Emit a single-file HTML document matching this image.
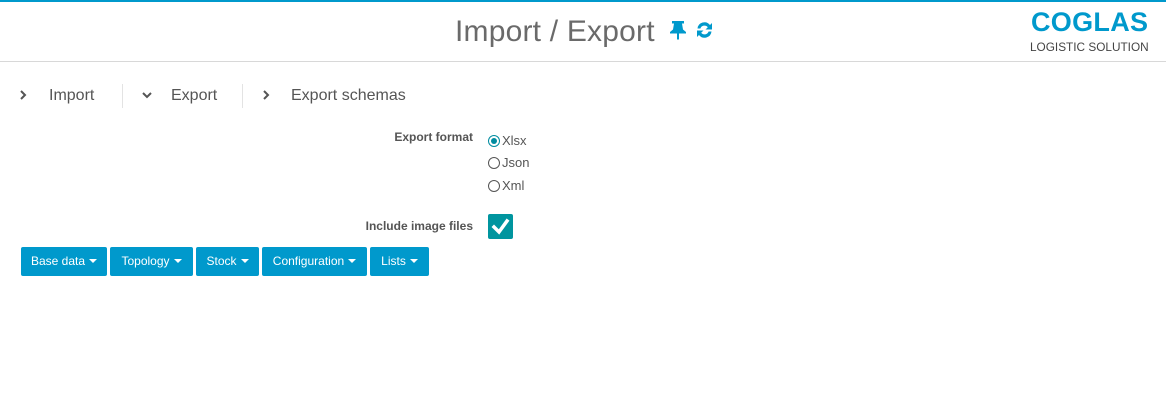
<!DOCTYPE html>
<html><head><meta charset="utf-8"><style>
*{margin:0;padding:0;box-sizing:border-box}
body{width:1166px;height:404px;background:#fff;font-family:"Liberation Sans",sans-serif;position:relative;overflow:hidden;color:#555}
.top{position:absolute;left:0;top:0;width:1166px;height:2px;background:#0099cc}
.hdr{position:absolute;left:0;top:61px;width:1166px;height:1px;background:#d8d8d8}
.title{position:absolute;left:455px;top:15px;font-size:30px;color:#6a6a6a;letter-spacing:0.2px}
.logo1{position:absolute;left:1031px;top:7px;font-size:27px;font-weight:bold;color:#0099cc;letter-spacing:0.3px}
.logo2{position:absolute;left:1030px;top:40px;font-size:11.8px;color:#444;letter-spacing:0}
.tab{position:absolute;top:87px;font-size:16px;color:#555}
.sep{position:absolute;top:84px;width:1px;height:24px;background:#e3e3e3}
.lbl{position:absolute;font-size:12px;font-weight:bold;color:#555;text-align:right;width:200px}
.opt{position:absolute;left:488px;font-size:13px;color:#555}
.opt i{display:inline-block;width:12px;height:12px;border:1px solid #555;border-radius:50%;vertical-align:-2px;margin-right:2px;position:relative}
.opt i.on{border-color:#008ca0}
.opt i.on:after{content:"";position:absolute;left:2px;top:2px;width:6px;height:6px;border-radius:50%;background:#008ca0}
.cb{position:absolute;left:488px;top:214px;width:25px;height:25px;background:#00959f;border-radius:2px}
.btn{position:absolute;top:247px;height:29px;background:#0099cc;color:#fff;font-size:12px;border-radius:2px;line-height:29px;text-align:center}
.btn:after{content:"";display:inline-block;border-left:4px solid transparent;border-right:4px solid transparent;border-top:4px solid #fff;margin-left:4px;vertical-align:2px}
</style></head><body>
<div class="top"></div>
<div class="title">Import / Export</div>
<svg style="position:absolute;left:669px;top:20px" width="18" height="20" viewBox="0 0 18 20"><path d="M3 1h12v2.5h-2l1 6 3 2.5v1.5H1V12l3-2.5 1-6H3z M8 13.5h2V19l-1 1-1-1z" fill="#0099cc"/></svg>
<svg style="position:absolute;left:694px;top:20px" width="21" height="20" viewBox="0 0 21 20"><path d="M3.5 8.5A7 7 0 0 1 16 5l2-2v6.5h-6.5l2.3-2.3A4.3 4.3 0 0 0 6.4 8.5z M17.5 11.5A7 7 0 0 1 5 15l-2 2v-6.5h6.5L7.2 12.8a4.3 4.3 0 0 0 7.4-1.3z" fill="#0099cc"/></svg>
<div class="logo1">COGLAS</div>
<div class="logo2">LOGISTIC SOLUTION</div>
<div class="hdr"></div>

<svg style="position:absolute;left:19px;top:90px" width="8" height="10"><path d="M2 1l4 4-4 4" stroke="#555" stroke-width="2" fill="none"/></svg>
<div class="tab" style="left:49px">Import</div>
<div class="sep" style="left:122px"></div>
<svg style="position:absolute;left:142px;top:91px" width="10" height="8"><path d="M1 2l4 4 4-4" stroke="#555" stroke-width="2" fill="none"/></svg>
<div class="tab" style="left:171px">Export</div>
<div class="sep" style="left:242px"></div>
<svg style="position:absolute;left:262px;top:90px" width="8" height="10"><path d="M2 1l4 4-4 4" stroke="#555" stroke-width="2" fill="none"/></svg>
<div class="tab" style="left:291px">Export schemas</div>

<div class="lbl" style="left:273px;top:130px">Export format</div>
<div class="opt" style="top:133px"><i class="on"></i>Xlsx</div>
<div class="opt" style="top:155px"><i></i>Json</div>
<div class="opt" style="top:178px"><i></i>Xml</div>
<div class="lbl" style="left:273px;top:219px">Include image files</div>
<div class="cb"><svg width="25" height="25"><path d="M6 13l5 5 8-11" stroke="#fff" stroke-width="3.5" fill="none" stroke-linecap="square"/></svg></div>

<div class="btn" style="left:21px;width:86px">Base data</div>
<div class="btn" style="left:110px;width:83px">Topology</div>
<div class="btn" style="left:196px;width:63px">Stock</div>
<div class="btn" style="left:262px;width:105px">Configuration</div>
<div class="btn" style="left:370px;width:59px">Lists</div>
</body></html>
